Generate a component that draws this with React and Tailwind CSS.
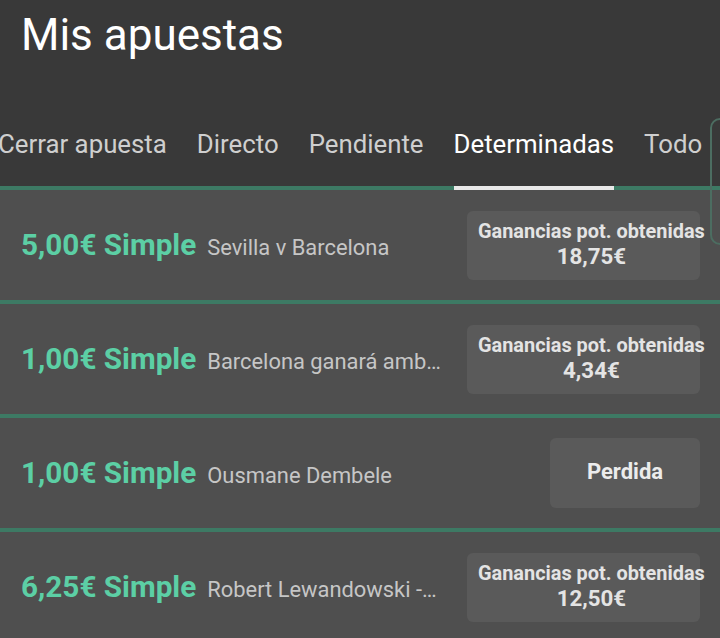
export default function App() {
  const rows = [
    { amount: "5,00€ Simple", desc: "Sevilla v Barcelona", value: "18,75€" },
    { amount: "1,00€ Simple", desc: "Barcelona ganará ambas partes del partido", value: "4,34€" },
    { amount: "1,00€ Simple", desc: "Ousmane Dembele", lost: true },
    { amount: "6,25€ Simple", desc: "Robert Lewandowski - Marcará en cualquier momento", value: "12,50€" },
  ];
  const tabs = ["Cerrar apuesta", "Directo", "Pendiente", "Determinadas", "Todo"];
  return (
    <div className="relative w-[720px] h-[638px] overflow-hidden bg-[#393939]" style={{ fontFamily: "Roboto, 'Noto Sans', sans-serif" }}>
      <div className="pt-[11px] pl-[21px] h-[57px] text-[44px] leading-[48px] text-white">Mis apuestas</div>
      <div className="h-[133px] flex items-end border-b-4 border-[#3d7a64]">
        <div className="flex ml-[-17px] mb-[-4px] whitespace-nowrap">
          {tabs.map((t) => (
            <div key={t} className="px-[15px]">
              <div
                className={
                  "text-[25.8px] leading-[28px] pb-[28px] border-b-4 " +
                  (t === "Determinadas" ? "border-[#e8e8e8] text-white" : "border-transparent text-[#cfcfcf]")
                }
              >
                {t}
              </div>
            </div>
          ))}
        </div>
      </div>
      {rows.map((r, i) => (
        <div key={i} className="h-[114px] bg-[#4f4f4f] border-b-4 border-[#3d7a64] flex items-center pl-[21px] pr-[20px]">
          <div className="flex-1 min-w-0 flex items-baseline gap-[11px] pr-[26px]">
            <span className="shrink-0 text-[29.7px] font-bold text-[#5ccfa5] whitespace-nowrap">{r.amount}</span>
            <span className="min-w-0 truncate text-[21.9px] text-[#c6c6c6]">{r.desc}</span>
          </div>
          {r.lost ? (
            <div className="w-[150px] h-[70px] rounded-md bg-[#5a5a5a] flex items-center justify-center pb-[4px] text-[22px] font-bold text-[#ececec]">
              Perdida
            </div>
          ) : (
            <div className="w-[233px] h-[69px] rounded-md bg-[#5a5a5a] px-[11px] pb-[2px] flex flex-col justify-center">
              <div className="w-max text-center font-bold text-[#e4e4e4]">
                <div className="text-[19.9px] leading-[24px]">Ganancias pot. obtenidas</div>
                <div className="text-[22.3px] leading-[24px]">{r.value}</div>
              </div>
            </div>
          )}
        </div>
      ))}
      <div className="absolute left-[710px] top-[118px] w-[40px] h-[127px] rounded-[10px] border-2 border-[#4c6d61]"></div>
    </div>
  );
}
